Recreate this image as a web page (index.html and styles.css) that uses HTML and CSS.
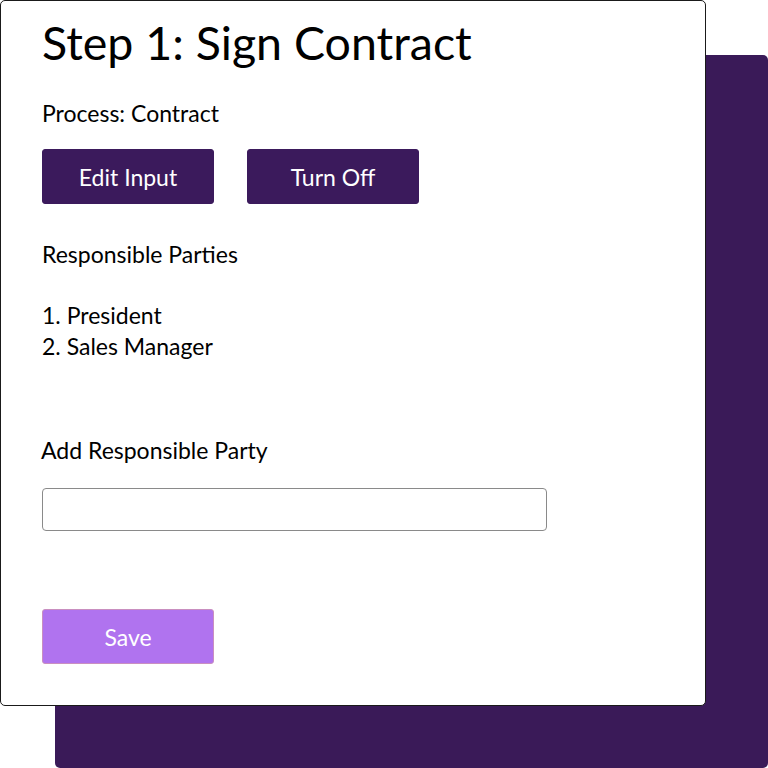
FILE: index.html
```html
<!DOCTYPE html>
<html lang="en">
<head>
    <meta charset="UTF-8">
    <meta name="viewport" content="width=device-width, initial-scale=1.0">
    <title>Step 1: Sign Contract</title>
    <link rel="stylesheet" href="styles.css">
</head>
<body>
    <div class="backdrop"></div>
    <div class="card">
        <h1>Step 1: Sign Contract</h1>
        <p class="process">Process: Contract</p>

        <div class="actions">
            <button class="btn btn-dark">Edit Input</button>
            <button class="btn btn-dark">Turn Off</button>
        </div>

        <h2 class="section-title">Responsible Parties</h2>
        <ol class="parties">
            <li>1. President</li>
            <li>2. Sales Manager</li>
        </ol>

        <label class="add-label" for="party">Add Responsible Party</label>
        <input id="party" class="party-input" type="text">

        <button class="btn btn-save">Save</button>
    </div>
</body>
</html>
```

FILE: styles.css
```css
body {
    margin: 0;
    padding: 0;
    background-color: #fff;
    font-family: Lato, "Open Sans", sans-serif;
    color: #000;
    width: 768px;
    height: 768px;
    position: relative;
    overflow: hidden;
}
/* bloque morado detrás de la tarjeta */
.backdrop {
    position: absolute;
    left: 55px;
    top: 55px;
    width: 713px;
    height: 713px;
    background-color: #3a1a58;
    border-radius: 5px;
}
.card {
    position: relative;
    box-sizing: border-box;
    width: 706px;
    height: 706px;
    background: #fff;
    border: 1px solid #1a1a1a;
    border-radius: 5px;
    padding: 0 0 0 41px;
    display: flex;
    flex-direction: column;
    align-items: flex-start;
}
h1 {
    font-size: 46.5px;
    font-weight: 400;
    line-height: 50px;
    margin: 16px 0 0;
}
.process {
    font-size: 23px;
    line-height: 26px;
    margin: 33px 0 0;
}
.actions {
    display: flex;
    gap: 33px;
    margin-top: 23px;
}
.btn {
    font-family: inherit;
    width: 172px;
    height: 55px;
    border-radius: 3px;
    font-size: 23px;
    color: #fff;
    cursor: pointer;
}
.btn-dark {
    background-color: #3b1a5c;
    border: 1px solid #3b1a5c;
}
.section-title {
    font-size: 23px;
    font-weight: 400;
    line-height: 26px;
    margin: 37px 0 0;
}
.parties {
    list-style: none;
    padding: 0;
    margin: 33px 0 0;
    font-size: 23px;
    line-height: 31px;
}
.add-label {
    font-size: 23px;
    line-height: 26px;
    margin: 75px 0 0 -1px;
}
.party-input {
    box-sizing: border-box;
    width: 505px;
    height: 43px;
    margin-top: 25px;
    border: 1px solid #8a8a8a;
    border-radius: 4px;
    font-family: inherit;
    font-size: 18px;
}
.btn-save {
    margin-top: 78px;
    background-color: #b073ef;
    border: 1px solid #c98fc0;
}
```
